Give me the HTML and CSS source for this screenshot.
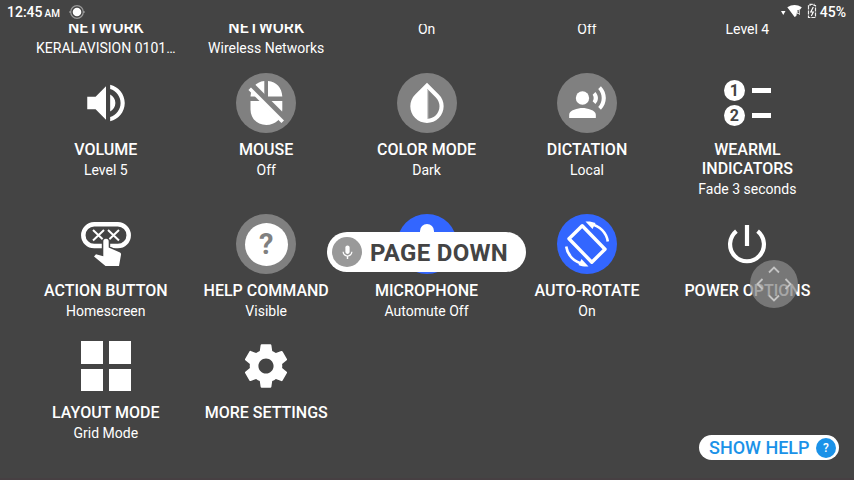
FILE: index.html
```html
<!DOCTYPE html>
<html lang="en">
<head>
<meta charset="utf-8">
<title>Control panel</title>
<link rel="stylesheet" href="styles.css">
</head>
<body>
<div class="screen">
  <header class="status">
    <span class="clock">12:45<small>AM</small></span>
    <svg class="dot" width="16" height="16" viewBox="0 0 16 16"><circle cx="8" cy="8" r="6.3" fill="none" stroke="#999" stroke-width="1.2"/><circle cx="8" cy="8" r="4.300" fill="#fff"/><path d="M2 8H0M14 8h2" stroke="#aaa" stroke-width="1.2"/></svg>
    <span class="spacer"></span>
    <svg class="signal" width="36" height="16" viewBox="0 0 36 16"><path d="M0 7h4.500L2.250 11z" fill="#fff"/><path d="M6.300 3.200Q13.500-1 20.800 3.200L18.800 6h-2.200l-1.300 6-1.700 1z" fill="#fff"/><path d="M17.300 6.500l-1.500 3h3M18.400 5v6" fill="none" stroke="#ccc" stroke-width="1"/><path d="M29 1.500v-1.200h4v1.200h1.500v12h-7v-12z" fill="none" stroke="#eee" stroke-width="1.200" stroke-dasharray="4 1"/><path d="M32.300 3l-2.500 5h2.500l-2 4" fill="none" stroke="#fff" stroke-width="1.200"/></svg>
    <span class="battery">45%</span>
  </header>

  <main class="viewport">
    <div class="grid">
      <div class="tile partial"><h2>NETWORK</h2><p>KERALAVISION 0101…</p></div>
      <div class="tile partial"><h2>NETWORK</h2><p>Wireless Networks</p></div>
      <div class="tile value"><p>On</p></div>
      <div class="tile value"><p>Off</p></div>
      <div class="tile value"><p>Level 4</p></div>

      <div class="tile">
        <div class="icon"><svg width="50" height="50" viewBox="0 0 24 24"><path d="M3 9v6h4l5 5V4L7 9H3zm13.500 3c0-1.770-1.020-3.290-2.500-4.030v8.050c1.480-.730 2.500-2.250 2.500-4.020zM14 3.230v2.060c2.890.860 5 3.540 5 6.710s-2.110 5.850-5 6.710v2.060c4.010-.910 7-4.490 7-8.770s-2.990-7.860-7-8.770z"/></svg></div>
        <h2>VOLUME</h2><p>Level 5</p>
      </div>
      <div class="tile">
        <div class="icon round"><svg width="60" height="60" viewBox="0 0 60 60"><path d="M28.300 8v15.500H14.500C15 14.500 20.500 8.800 28.300 8zM32 8c8.500.800 14 7 14.300 15.500H32zM14.500 28h31.800v8.500c0 9-7 15.500-16 15.500s-15.800-6.500-15.800-15.500z"/><path d="M15.500 13.500L49 47" stroke="#808080" stroke-width="8"/><path d="M13.700 15.700L46.700 48.700" stroke="#fff" stroke-width="3.600"/></svg></div>
        <h2>MOUSE</h2><p>Off</p>
      </div>
      <div class="tile">
        <div class="icon round"><svg width="50" height="50" viewBox="0 0 24 24"><path d="M17.660 7.930L12 2.270 6.340 7.930c-3.120 3.120-3.120 8.190 0 11.310C7.900 20.800 9.950 21.580 12 21.580s4.100-.780 5.660-2.340c3.120-3.120 3.120-8.190 0-11.310zM12.200 19.590V5.300l4.050 4.040c2.350 2.340 2.350 6.150 0 8.490-1.100 1.100-2.500 1.660-4.050 1.760z"/><path d="M12.400 6v13.500" fill="none" stroke="#fff" stroke-width=".5" stroke-dasharray=".48 .48"/></svg></div>
        <h2>COLOR MODE</h2><p>Dark</p>
      </div>
      <div class="tile">
        <div class="icon round"><svg width="40" height="40" viewBox="0 0 24 24"><circle cx="9.300" cy="9" r="4"/><path d="M9.300 15c-2.670 0-8 1.340-8 4v2h16v-2c0-2.660-5.330-4-8-4zm7.760-9.640l-1.680 1.690c.84 1.180.84 2.710 0 3.890l1.680 1.690c2.020-2.020 2.020-5.070 0-7.270zM20.370 2l-1.630 1.630c2.770 3.020 2.770 7.560 0 10.740L20.370 16c3.900-3.890 3.910-9.950 0-14z"/></svg></div>
        <h2>DICTATION</h2><p>Local</p>
      </div>
      <div class="tile">
        <div class="icon"><div class="legend"><b>1</b><i></i><b>2</b><i></i></div></div>
        <h2>WEARML<br>INDICATORS</h2><p>Fade 3 seconds</p>
      </div>

      <div class="tile">
        <div class="icon"><svg width="60" height="60" viewBox="0 0 60 60"><rect x="7.300" y="10.300" width="45.400" height="21.800" rx="10.900" fill="none" stroke="#fff" stroke-width="4.500"/><path d="M17 16l11 10.500M28 16L17 26.500M32 16l11 10.500M43 16L32 26.500" stroke="#fff" stroke-width="2"/><path d="M27.300 39V27.500a2.700 2.700 0 0 1 5.400 0V33.500l11.300 5c1 .5 1.200 1.300 1 2.300L43 52H29.500L18 42.500l2-2.200 7.300 2z" stroke="#444" stroke-width="3" paint-order="stroke"/></svg></div>
        <h2>ACTION BUTTON</h2><p>Homescreen</p>
      </div>
      <div class="tile">
        <div class="icon round"><span class="question">?</span></div>
        <h2>HELP COMMAND</h2><p>Visible</p>
      </div>
      <div class="tile">
        <div class="icon round active"><svg width="60" height="60" viewBox="0 0 60 60"><rect x="23" y="10" width="14" height="26" rx="7"/><path d="M18 29a12 12 0 0 0 24 0M30 41v7" fill="none" stroke="#fff" stroke-width="4"/></svg></div>
        <h2>MICROPHONE</h2><p>Automute Off</p>
      </div>
      <div class="tile">
        <div class="icon round active"><svg width="60" height="60" viewBox="0 0 60 60"><path d="M25.200 11.800L12 24.800 34.800 48.200 48 35.200z" fill="none" stroke="#fff" stroke-width="3.400" stroke-linejoin="round"/><path d="M34 10.300A20.500 20.500 0 0 1 50.800 27.500M26 49.700A20.500 20.500 0 0 1 9.200 32.500" fill="none" stroke="#fff" stroke-width="2.600"/><path d="M28.500 7.500c4-.3 7 .2 10 1.500l-3 6zM31.500 52.500c-4 .3-7-.2-10-1.500l3-6z"/></svg></div>
        <h2>AUTO-ROTATE</h2><p>On</p>
      </div>
      <div class="tile">
        <div class="icon"><svg width="60" height="60" viewBox="0 0 60 60"><path d="M19.400 17.200a16.900 16.900 0 1 0 21.200 0M30 11v21" fill="none" stroke="#fff" stroke-width="4.200"/></svg></div>
        <h2>POWER OPTIONS</h2>
      </div>

      <div class="tile">
        <div class="icon"><div class="squares"><i></i><i></i><i></i><i></i></div></div>
        <h2>LAYOUT MODE</h2><p>Grid Mode</p>
      </div>
      <div class="tile">
        <div class="icon"><svg width="52" height="52" viewBox="0 0 24 24"><path d="M19.430 12.980c.04-.32.07-.64.07-.98s-.03-.66-.07-.98l2.110-1.650c.19-.15.24-.42.12-.64l-2-3.460c-.12-.22-.39-.3-.61-.22l-2.490 1c-.52-.4-1.080-.73-1.690-.98l-.38-2.650C14.460 2.180 14.250 2 14 2h-4c-.25 0-.46.18-.49.42l-.38 2.650c-.61.25-1.170.59-1.690.98l-2.490-1c-.23-.09-.49 0-.61.22l-2 3.460c-.13.22-.07.49.12.64l2.110 1.650c-.04.32-.07.65-.07.98s.03.66.07.98l-2.110 1.650c-.19.15-.24.42-.12.64l2 3.460c.12.22.39.3.61.22l2.490-1c.52.4 1.080.73 1.690.98l.38 2.650c.03.24.24.42.49.42h4c.25 0 .46-.18.49-.42l.38-2.650c.61-.25 1.170-.59 1.690-.98l2.490 1c.23.09.49 0 .61-.22l2-3.460c.12-.22.07-.49-.12-.64l-2.110-1.650zM12 15.500c-1.930 0-3.500-1.570-3.500-3.500s1.570-3.500 3.500-3.500 3.500 1.570 3.500 3.500-1.570 3.500-3.500 3.500z"/></svg></div>
        <h2>MORE SETTINGS</h2>
      </div>
    </div>
  </main>

  <div class="toast">
    <span class="mic"><svg width="17" height="17" viewBox="0 0 24 24"><path d="M12 14c1.660 0 3-1.340 3-3V5c0-1.660-1.340-3-3-3S9 3.340 9 5v6c0 1.660 1.340 3 3 3z"/><path d="M17.300 11c0 3-2.540 5.100-5.300 5.100S6.700 14 6.700 11H5c0 3.410 2.720 6.230 6 6.720V21h2v-3.280c3.280-.48 6-3.300 6-6.720h-1.700z"/></svg></span>
    <span class="toast-text">PAGE DOWN</span>
  </div>

  <svg class="joystick" width="48" height="48" viewBox="0 0 48 48"><circle cx="24" cy="24" r="24" fill="#888" fill-opacity=".75"/><path d="M19 12.500l5-5 5 5M19 35.500l5 5 5-5M12.500 19l-5 5 5 5M35.500 19l5 5-5 5" fill="none" stroke="#c4c4c4" stroke-width="1.800"/></svg>

  <div class="help"><span class="help-text">SHOW HELP</span><span class="badge">?</span></div>
</div>
</body>
</html>
```
FILE: styles.css
```css
* { box-sizing: border-box; margin: 0; padding: 0; }

body {
  background: #444;
  color: #fff;
  font-family: Roboto, "Liberation Sans", sans-serif;
}

.screen {
  position: relative;
  width: 854px;
  height: 480px;
  overflow: hidden;
  display: flex;
  flex-direction: column;
  border-bottom: 2px solid #463f42;
}

.status {
  height: 24px;
  flex: none;
  display: flex;
  align-items: center;
  padding: 0 8px 0 7px;
  font-size: 14px;
  font-weight: 500;
}
.clock small { font-size: 10px; margin-left: 2px; }
.dot { margin-left: 9px; }
.spacer { flex: 1; }
.signal { margin: -1px 3px 0 0; overflow: visible; }

.viewport { flex: 1; overflow: hidden; }

.grid {
  width: 802px;
  margin: -6px auto 0 25.6px;
  display: grid;
  grid-template-columns: repeat(5, 1fr);
  grid-template-rows: 55px 141px 122px 122px;
}

.tile {
  display: flex;
  flex-direction: column;
  align-items: center;
  text-align: center;
  white-space: nowrap;
}
.tile h2 {
  margin-top: 7px;
  font-size: 16px;
  line-height: 19px;
  font-weight: 500;
}
.tile p { font-size: 14px; line-height: 22px; }
.tile.partial h2 { margin-top: 0; }
.tile.value p { margin-top: 6px; line-height: 10px; }

.icon {
  width: 60px;
  height: 60px;
  flex: none;
  display: flex;
  align-items: center;
  justify-content: center;
}
.icon svg, .mic svg { fill: #fff; }
.round { border-radius: 50%; background: #808080; }
.active { background: #36f; }

.legend {
  display: grid;
  grid-template-columns: 21px 19px;
  gap: 4px 7px;
  align-items: center;
}
.legend b {
  height: 21px;
  border-radius: 50%;
  background: #fff;
  color: #444;
  font-size: 16px;
  line-height: 21px;
  font-weight: 700;
}
.legend i { height: 5px; background: #fff; }

.question {
  width: 43px;
  height: 43px;
  border-radius: 50%;
  background: #fff;
  color: #808080;
  font-size: 29px;
  line-height: 43px;
  font-weight: 700;
}

.squares {
  display: grid;
  grid-template-columns: 22px 22px;
  grid-template-rows: 22.500px 22.500px;
  gap: 5px 6px;
}
.squares i { background: #fff; }

.toast {
  position: absolute;
  left: 327px;
  top: 232px;
  width: 199px;
  height: 40px;
  border-radius: 20px;
  background: #fff;
  color: #444;
  display: flex;
  align-items: center;
  padding-left: 5px;
  gap: 8px;
}
.mic {
  width: 30px;
  height: 30px;
  border-radius: 50%;
  background: #999;
  display: flex;
  align-items: center;
  justify-content: center;
}
.toast-text {
  padding-top: 2px;
  font-size: 24px;
  font-weight: 700;
  line-height: 40px;
  letter-spacing: .3px;
  white-space: nowrap;
}

.joystick { position: absolute; left: 750px; top: 260px; }

.help {
  position: absolute;
  left: 699px;
  top: 435px;
  width: 140px;
  height: 25px;
  border-radius: 13px;
  background: #fff;
  color: #1b92e8;
  display: flex;
  align-items: center;
  justify-content: space-between;
  padding: 0 3px 0 10px;
}
.help-text { font-size: 18px; font-weight: 500; white-space: nowrap; }
.badge {
  width: 20px;
  height: 20px;
  border-radius: 50%;
  background: #1b92e8;
  color: #fff;
  font-size: 12px;
  line-height: 20px;
  font-weight: 500;
  text-align: center;
}
```
